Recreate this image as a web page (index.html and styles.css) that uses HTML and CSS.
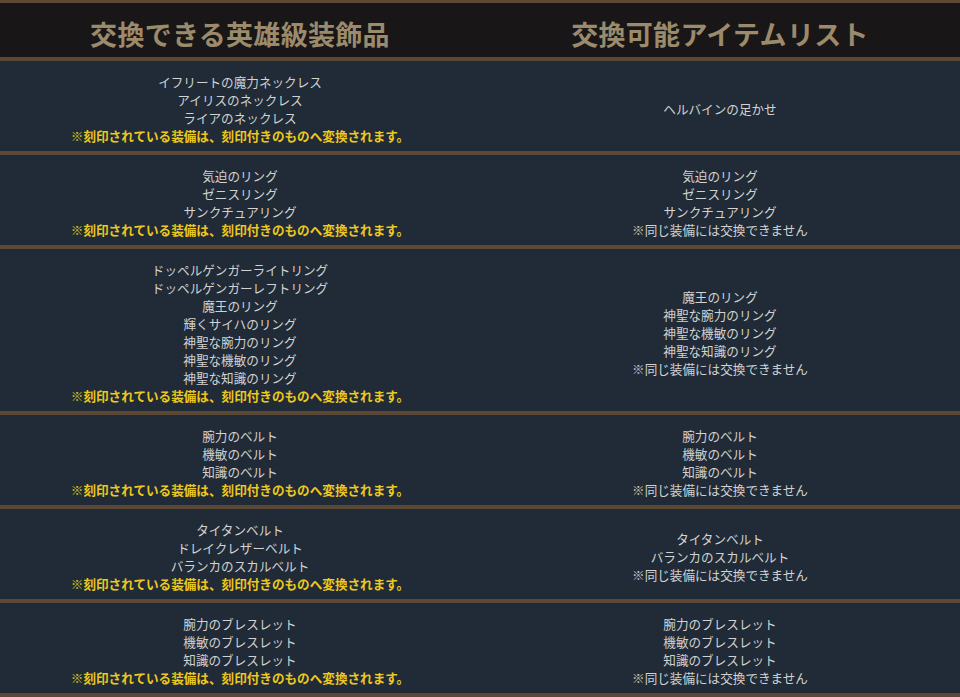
FILE: index.html
```html
<!DOCTYPE html>
<html lang="ja">
<head>
<meta charset="utf-8">
<link rel="stylesheet" href="styles.css">
</head>
<body>
<table class="exchange">
  <thead>
    <tr>
      <th>交換できる英雄級装飾品</th>
      <th>交換可能アイテムリスト</th>
    </tr>
  </thead>
  <tbody>
    <tr>
      <td>イフリートの魔力ネックレス<br>アイリスのネックレス<br>ライアのネックレス<br><span class="note">※刻印されている装備は、刻印付きのものへ変換されます。</span></td>
      <td>ヘルバインの足かせ</td>
    </tr>
    <tr>
      <td>気迫のリング<br>ゼニスリング<br>サンクチュアリング<br><span class="note">※刻印されている装備は、刻印付きのものへ変換されます。</span></td>
      <td>気迫のリング<br>ゼニスリング<br>サンクチュアリング<br>※同じ装備には交換できません</td>
    </tr>
    <tr>
      <td>ドッペルゲンガーライトリング<br>ドッペルゲンガーレフトリング<br>魔王のリング<br>輝くサイハのリング<br>神聖な腕力のリング<br>神聖な機敏のリング<br>神聖な知識のリング<br><span class="note">※刻印されている装備は、刻印付きのものへ変換されます。</span></td>
      <td>魔王のリング<br>神聖な腕力のリング<br>神聖な機敏のリング<br>神聖な知識のリング<br>※同じ装備には交換できません</td>
    </tr>
    <tr>
      <td>腕力のベルト<br>機敏のベルト<br>知識のベルト<br><span class="note">※刻印されている装備は、刻印付きのものへ変換されます。</span></td>
      <td>腕力のベルト<br>機敏のベルト<br>知識のベルト<br>※同じ装備には交換できません</td>
    </tr>
    <tr>
      <td>タイタンベルト<br>ドレイクレザーベルト<br>バランカのスカルベルト<br><span class="note">※刻印されている装備は、刻印付きのものへ変換されます。</span></td>
      <td>タイタンベルト<br>バランカのスカルベルト<br>※同じ装備には交換できません</td>
    </tr>
    <tr>
      <td>腕力のブレスレット<br>機敏のブレスレット<br>知識のブレスレット<br><span class="note">※刻印されている装備は、刻印付きのものへ変換されます。</span></td>
      <td>腕力のブレスレット<br>機敏のブレスレット<br>知識のブレスレット<br>※同じ装備には交換できません</td>
    </tr>
  </tbody>
</table>
</body>
</html>
```

FILE: styles.css
```css
html, body {
  margin: 0;
  padding: 0;
  background: #202b37;
}
.exchange {
  width: 960px;
  border-collapse: collapse;
  table-layout: fixed;
  font-family: "Noto Sans CJK JP", "Noto Sans", sans-serif;
}
.exchange th {
  height: 46px;
  padding: 8px 0 0;
  background: #181617;
  color: #9b8a6b;
  font-size: 27px;
  font-weight: 700;
  line-height: 30px;
  text-align: center;
  vertical-align: middle;
  border-top: 3px solid #5b4936;
  border-bottom: 4px solid #5b4936;
  letter-spacing: 0.3px;
}
.exchange td {
  width: 50%;
  padding: 12px 0 6px;
  background: #202b37;
  color: #d2d2d2;
  font-size: 12.6px;
  line-height: 18px;
  text-align: center;
  vertical-align: middle;
  border-bottom: 4px solid #5b4936;
}
.note {
  color: #ecc91c;
  font-weight: 700;
  letter-spacing: 0;
}
```
